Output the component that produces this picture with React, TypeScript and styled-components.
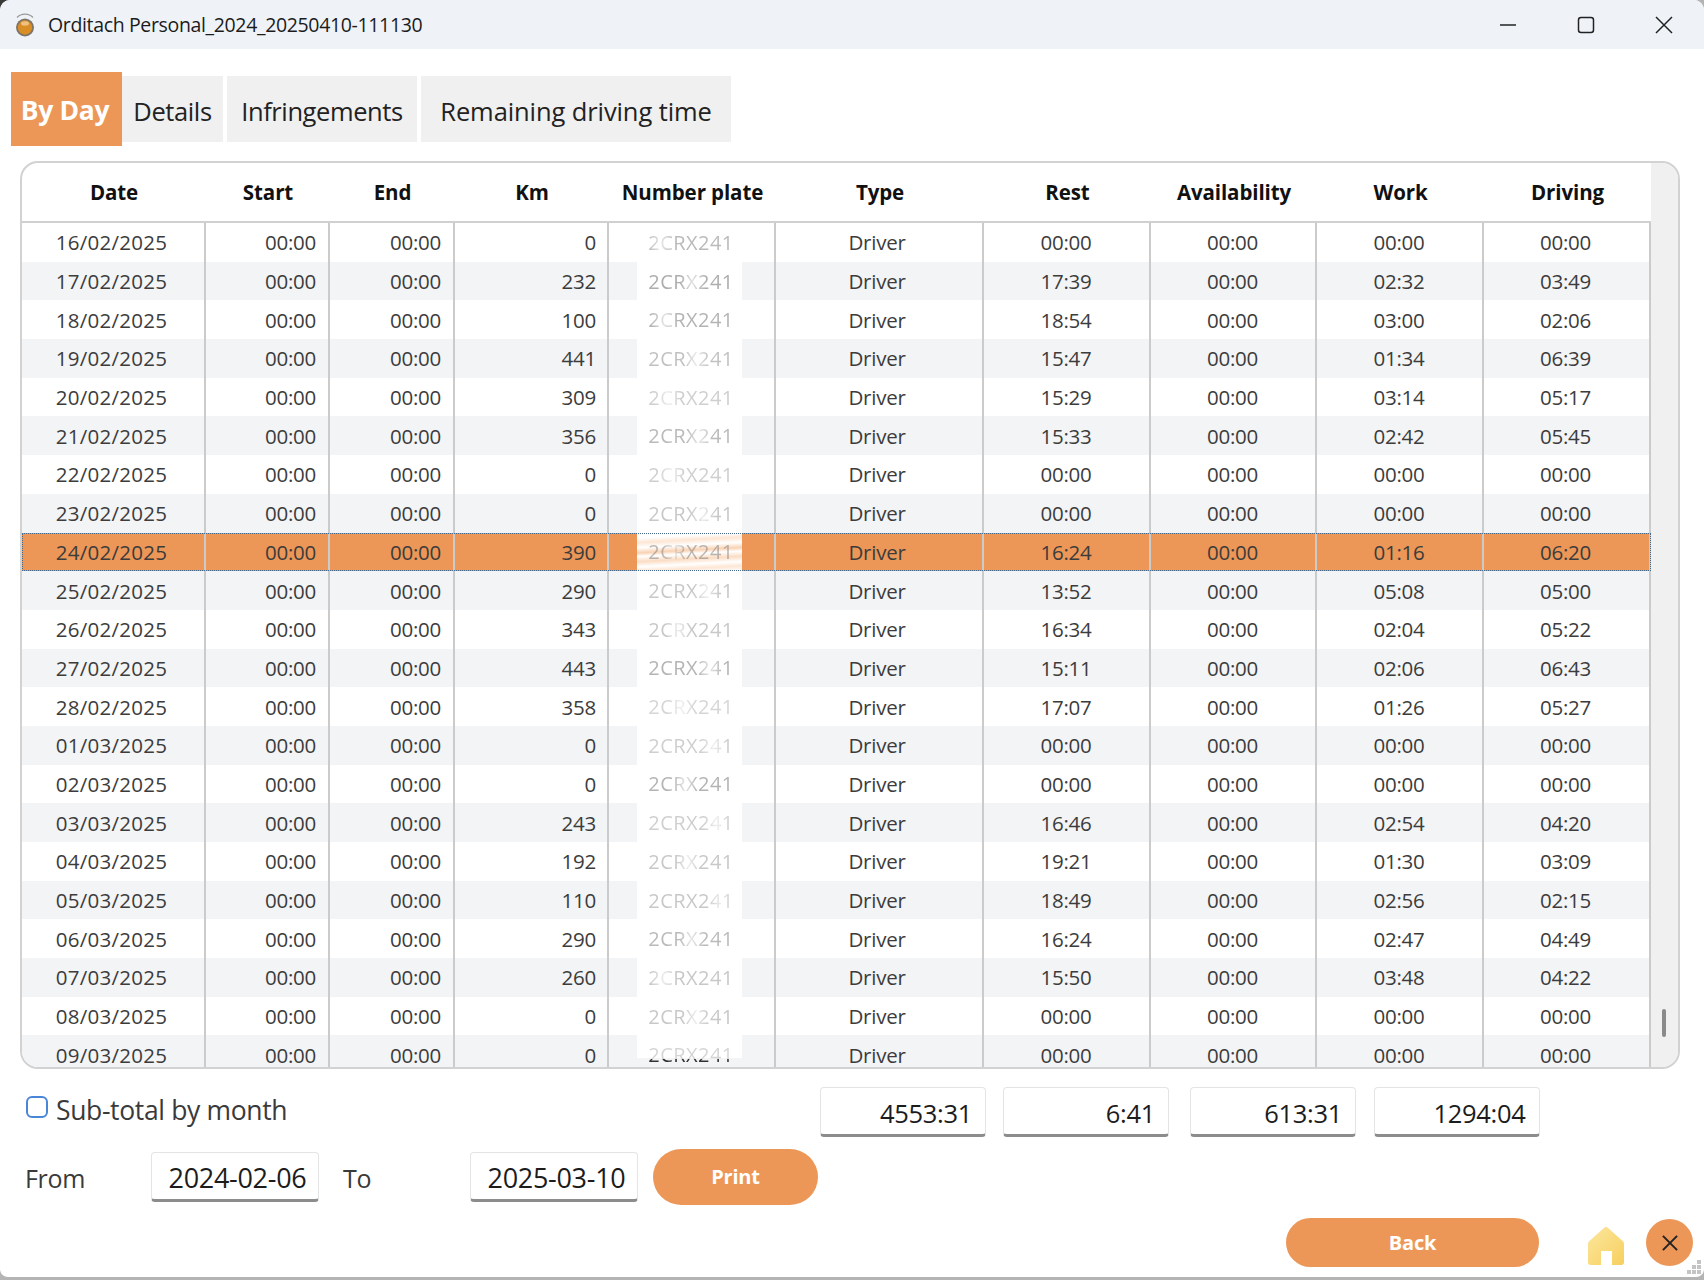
import React from 'react';
import styled, { createGlobalStyle } from 'styled-components';

const ORANGE = '#ec9757';
const FONT = '"Open Sans", "Noto Sans", sans-serif';
const COLUMNS = '184px 124px 125px 154px 167px 208px 167px 166px 167px 167px';

const GlobalStyle = createGlobalStyle`
    html, body {
        margin: 0;
        padding: 0;
        height: 1280px;
        overflow: hidden;
        background: radial-gradient(circle at 0 0, #3a3a3a 9px, #b4b4b4 11px);
    }
    * {
        box-sizing: border-box;
    }
`;

type Row = [string, string, string, string, string, string, number];

// date, km, rest, work, driving, availability, plate opacity
const rows: Row[] = [
    ['16/02/2025', '0', '00:00', '00:00', '00:00', '00:00', 0.5],
    ['17/02/2025', '232', '17:39', '02:32', '03:49', '00:00', 0.6],
    ['18/02/2025', '100', '18:54', '03:00', '02:06', '00:00', 0.55],
    ['19/02/2025', '441', '15:47', '01:34', '06:39', '00:00', 0.45],
    ['20/02/2025', '309', '15:29', '03:14', '05:17', '00:00', 0.35],
    ['21/02/2025', '356', '15:33', '02:42', '05:45', '00:00', 0.5],
    ['22/02/2025', '0', '00:00', '00:00', '00:00', '00:00', 0.35],
    ['23/02/2025', '0', '00:00', '00:00', '00:00', '00:00', 0.4],
    ['24/02/2025', '390', '16:24', '01:16', '06:20', '00:00', 0.5],
    ['25/02/2025', '290', '13:52', '05:08', '05:00', '00:00', 0.4],
    ['26/02/2025', '343', '16:34', '02:04', '05:22', '00:00', 0.4],
    ['27/02/2025', '443', '15:11', '02:06', '06:43', '00:00', 0.55],
    ['28/02/2025', '358', '17:07', '01:26', '05:27', '00:00', 0.3],
    ['01/03/2025', '0', '00:00', '00:00', '00:00', '00:00', 0.35],
    ['02/03/2025', '0', '00:00', '00:00', '00:00', '00:00', 0.55],
    ['03/03/2025', '243', '16:46', '02:54', '04:20', '00:00', 0.35],
    ['04/03/2025', '192', '19:21', '01:30', '03:09', '00:00', 0.4],
    ['05/03/2025', '110', '18:49', '02:56', '02:15', '00:00', 0.4],
    ['06/03/2025', '290', '16:24', '02:47', '04:49', '00:00', 0.5],
    ['07/03/2025', '260', '15:50', '03:48', '04:22', '00:00', 0.4],
    ['08/03/2025', '0', '00:00', '00:00', '00:00', '00:00', 0.4],
    ['09/03/2025', '0', '00:00', '00:00', '00:00', '00:00', 1],
];

const headers = ['Date', 'Start', 'End', 'Km', 'Number plate', 'Type', 'Rest', 'Availability', 'Work', 'Driving'];

// the plate numbers are smudged out in a different place on each row
const smudge = (i: number) => {
    const at = 15 + ((i * 37) % 70);
    return `linear-gradient(90deg, #000 ${at - 15}%, rgba(0,0,0,0.35) ${at}%, #000 ${at + 15}%)`;
};

const AppIcon = () => (
    <svg width="28" height="30" viewBox="0 0 28 30">
        <path d="M6 7.5 C10 3, 18 3, 22 7.5" fill="none" stroke="#9a9a9a" strokeWidth="1.3" />
        <circle cx="14" cy="17.5" r="9" fill="#7b7468" />
        <circle cx="14" cy="17.5" r="7.2" fill="#d98d25" />
        <ellipse cx="14" cy="13.5" rx="4" ry="2.2" fill="#f0c080" />
    </svg>
);

const MinIcon = () => (
    <svg width="18" height="18" viewBox="0 0 18 18">
        <path d="M1 9 H17" stroke="#222" strokeWidth="1.5" />
    </svg>
);

const MaxIcon = () => (
    <svg width="18" height="18" viewBox="0 0 18 18">
        <rect x="1.5" y="1.5" width="15" height="15" rx="2.5" fill="none" stroke="#222" strokeWidth="1.5" />
    </svg>
);

const CrossIcon = ({ size = 18, weight = 1.5 }: { size?: number; weight?: number }) => (
    <svg width={size} height={size} viewBox="0 0 18 18">
        <path d="M1 1 L17 17 M17 1 L1 17" stroke="#222" strokeWidth={weight} />
    </svg>
);

const HomeIcon = () => (
    <svg width="36" height="38" viewBox="0 0 36 38">
        <defs>
            <linearGradient id="home-fill" x1="0" y1="0" x2="1" y2="1">
                <stop offset="0" stopColor="#fce79f" />
                <stop offset="1" stopColor="#f7cf5e" />
            </linearGradient>
        </defs>
        <path
            d="M15.6 1.2 a3.4 3.4 0 0 1 4.8 0 L34.6 14 a3.4 3.4 0 0 1 1.4 2.8 V35 a2.6 2.6 0 0 1 -2.6 3 H24 V24 H13 V38 H2.6 A2.6 2.6 0 0 1 0 35 V16.8 a3.4 3.4 0 0 1 1.4 -2.8 Z"
            fill="url(#home-fill)"
        />
    </svg>
);

const ResizeGrip = () => (
    <svg width="18" height="18" viewBox="0 0 18 18">
        <g fill="#c4c4c4">
            <rect x="12" y="1" width="4" height="4" />
            <rect x="7" y="6" width="4" height="4" />
            <rect x="12" y="6" width="4" height="4" />
            <rect x="2" y="11" width="4" height="4" />
            <rect x="7" y="11" width="4" height="4" />
            <rect x="12" y="11" width="4" height="4" />
        </g>
    </svg>
);

export default function App() {
    return (
        <React.Fragment>
            <GlobalStyle />
            <Window>
                <TitleBar>
                    <AppIcon />
                    <Title>Orditach Personal_2024_20250410-111130</Title>
                    <WindowButtons>
                        <MinIcon />
                        <MaxIcon />
                        <CrossIcon />
                    </WindowButtons>
                </TitleBar>

                <Tabs>
                    <ActiveTab>By Day</ActiveTab>
                    <Tab $width={101} $tracking={-0.4}>Details</Tab>
                    <Tab $width={190} $tracking={-0.4}>Infringements</Tab>
                    <Tab $width={310} $tracking={-0.1}>Remaining driving time</Tab>
                </Tabs>

                <Panel>
                    <TableArea>
                        <HeaderRow>
                            {headers.map(h => (
                                <HeaderCell key={h}>{h}</HeaderCell>
                            ))}
                        </HeaderRow>
                        <TableBody>
                            {rows.map(([date, km, rest, work, driving, avail, ink], i) => {
                                const last = i === rows.length - 1;
                                return (
                                    <DataRow key={date} $shaded={i % 2 === 1} $selected={i === 8}>
                                        <DateCell>{date}</DateCell>
                                        <Cell $align="right" $pad={12}>00:00</Cell>
                                        <Cell $align="right" $pad={12}>00:00</Cell>
                                        <Cell $align="right" $pad={11}>{km}</Cell>
                                        <PlateCell>
                                            <PlatePatch $selected={i === 8} $last={last}>
                                                <PlateText
                                                    $last={last}
                                                    style={last ? undefined : { opacity: ink, WebkitMaskImage: smudge(i) }}
                                                >
                                                    2CRX241
                                                </PlateText>
                                            </PlatePatch>
                                        </PlateCell>
                                        <Cell $pad={4}>Driver</Cell>
                                        <Cell $pad={1}>{rest}</Cell>
                                        <Cell $pad={1}>{avail}</Cell>
                                        <Cell $pad={1}>{work}</Cell>
                                        <Cell $pad={2}>{driving}</Cell>
                                    </DataRow>
                                );
                            })}
                        </TableBody>
                    </TableArea>
                    <ScrollTrack>
                        <ScrollThumb />
                    </ScrollTrack>
                </Panel>

                <TotalsRow>
                    <SubTotal>
                        <CheckBox type="checkbox" />
                        Sub-total by month
                    </SubTotal>
                    <TotalBox readOnly value="4553:31" />
                    <TotalBox readOnly value="6:41" />
                    <TotalBox readOnly value="613:31" />
                    <TotalBox readOnly value="1294:04" />
                </TotalsRow>

                <RangeRow>
                    <RangeLabel $width={126}>From</RangeLabel>
                    <DateBox readOnly value="2024-02-06" />
                    <RangeLabel $width={127} $indent={24}>To</RangeLabel>
                    <DateBox readOnly value="2025-03-10" />
                    <PrintButton>Print</PrintButton>
                </RangeRow>

                <ActionRow>
                    <BackButton>Back</BackButton>
                    <HomeLink><HomeIcon /></HomeLink>
                    <CloseButton><CrossIcon size={16} weight={2.2} /></CloseButton>
                </ActionRow>

                <Grip><ResizeGrip /></Grip>
            </Window>
        </React.Fragment>
    );
}

const Window = styled.div`
    position: relative;
    width: 1704px;
    height: 1277px;
    background: #ffffff;
    border-radius: 10px 10px 8px 8px;
    overflow: hidden;
    font-family: ${FONT};
    color: #222;
`;

const TitleBar = styled.div`
    display: flex;
    align-items: center;
    height: 49px;
    padding: 0 24px 0 11px;
    background: #eff3f8;
`;

const Title = styled.div`
    margin-left: 9px;
    font-size: 19.5px;
    letter-spacing: -0.35px;
    color: #1c1c1c;
`;

const WindowButtons = styled.div`
    display: flex;
    align-items: center;
    gap: 60px;
    margin-left: auto;
    padding-right: 7px;
`;

const Tabs = styled.div`
    display: flex;
    align-items: center;
    height: 74px;
    margin: 23px 0 0 11px;
`;

const ActiveTab = styled.div`
    display: flex;
    align-items: center;
    justify-content: center;
    width: 111px;
    height: 74px;
    padding: 1px 3px 0 0;
    background: ${ORANGE};
    color: #fff;
    font-size: 26.5px;
    font-weight: 700;
    letter-spacing: -0.3px;
`;

const Tab = styled.div<{ $width: number; $tracking: number }>`
    display: flex;
    align-items: center;
    justify-content: center;
    width: ${p => p.$width}px;
    height: 66px;
    margin-right: 4px;
    padding-top: 3px;
    background: #f0f0f0;
    color: #222;
    font-size: 25.5px;
    letter-spacing: ${p => p.$tracking}px;
`;

const Panel = styled.div`
    display: flex;
    width: 1660px;
    height: 908px;
    margin: 15px 0 0 20px;
    border: 2px solid #d2d2d2;
    border-radius: 18px;
    overflow: hidden;
`;

const TableArea = styled.div`
    display: flex;
    flex-direction: column;
    width: 1629px;
`;

const HeaderRow = styled.div`
    display: grid;
    grid-template-columns: ${COLUMNS};
    height: 60px;
    flex: none;
    padding-bottom: 1px;
    border-bottom: 2px solid #d0d0d0;
`;

const HeaderCell = styled.div`
    display: flex;
    align-items: center;
    justify-content: center;
    font-size: 20.5px;
    font-weight: 700;
    letter-spacing: -0.1px;
    color: #111;
`;

const TableBody = styled.div`
    flex: 1;
    overflow: hidden;
`;

const DataRow = styled.div<{ $shaded: boolean; $selected: boolean }>`
    display: grid;
    grid-template-columns: ${COLUMNS};
    height: 38.7px;
    background: ${p => (p.$selected ? ORANGE : p.$shaded ? '#f3f4f6' : '#ffffff')};
    outline: ${p => (p.$selected ? '1px dotted #44688c' : 'none')};
    outline-offset: -1px;
`;

const Cell = styled.div<{ $align?: 'right'; $pad: number }>`
    display: flex;
    align-items: center;
    justify-content: ${p => (p.$align === 'right' ? 'flex-end' : 'center')};
    padding-right: ${p => p.$pad}px;
    border-right: 2px solid #cbcbcb;
    font-size: 20.5px;
    letter-spacing: -0.25px;
    color: #3c3c3c;
`;

const DateCell = styled.div`
    display: flex;
    align-items: center;
    justify-content: center;
    padding-right: 3px;
    border-right: 2px solid #cbcbcb;
    font-size: 20.5px;
    letter-spacing: 0.25px;
    color: #3c3c3c;
`;

const PlateCell = styled.div`
    display: flex;
    padding-left: 28px;
    border-right: 2px solid #cbcbcb;
`;

const PlatePatch = styled.div<{ $selected: boolean; $last: boolean }>`
    display: flex;
    align-items: center;
    justify-content: center;
    width: 105px;
    height: 100%;
    padding-left: 3px;
    background: ${p =>
        p.$selected
            ? 'linear-gradient(177deg, #fff 0 12%, #fde6d4 22%, #fff 34%, #f9d2b3 46%, #fff 54%, #fbdcc3 66%, #fff 78%, #fde6d4 88%, #fff 100%)'
            : p.$last
            ? 'linear-gradient(#fff, #fff) top / 100% 23px no-repeat'
            : '#ffffff'};
`;

const PlateText = styled.span<{ $last: boolean }>`
    font-size: 20px;
    letter-spacing: 0.45px;
    color: ${p => (p.$last ? 'transparent' : '#777')};
    filter: blur(0.7px);
    background: ${p => (p.$last ? 'linear-gradient(#d4d4d4 0 18px, #303030 18px)' : 'none')};
    background-clip: ${p => (p.$last ? 'text' : 'border-box')};
    -webkit-background-clip: ${p => (p.$last ? 'text' : 'border-box')};
`;

const ScrollTrack = styled.div`
    display: flex;
    flex: 1;
    flex-direction: column;
    justify-content: flex-end;
    align-items: center;
    padding: 0 2px 30px 0;
    background: #f0f0f0;
`;

const ScrollThumb = styled.div`
    width: 4px;
    height: 28px;
    border-radius: 2px;
    background: #8a8a8a;
`;

const TotalsRow = styled.div`
    display: grid;
    grid-template-columns: 820px 183px 187px 183.5px 166px;
    align-items: center;
    height: 50px;
    margin-top: 18px;
`;

const SubTotal = styled.label`
    display: flex;
    align-items: center;
    gap: 8px;
    padding: 0 0 4px 26px;
    font-size: 26.5px;
    letter-spacing: -0.35px;
    color: #3a3a3a;
`;

const CheckBox = styled.input`
    appearance: none;
    width: 22px;
    height: 22px;
    margin: -7px 0 0;
    background: #fff;
    border: 2px solid #4a86d8;
    border-radius: 6px;
`;

const FieldBox = styled.input`
    height: 50px;
    border: 1px solid #e4e4e4;
    border-bottom: 3px solid #8c8c8c;
    border-radius: 4px;
    background: #fff;
    font-family: ${FONT};
    color: #1c1c1c;
    outline: none;
`;

const TotalBox = styled(FieldBox)`
    width: 166px;
    padding: 3px 13px 0 0;
    font-size: 25.5px;
    letter-spacing: -0.3px;
    text-align: right;
`;

const DateBox = styled(FieldBox)`
    width: 168px;
    padding: 3px 0 0 5px;
    font-size: 27px;
    letter-spacing: -0.3px;
    text-align: center;
`;

const RangeRow = styled.div`
    display: flex;
    align-items: center;
    height: 57px;
    margin-top: 11px;
    padding-left: 25px;
`;

const RangeLabel = styled.div<{ $width: number; $indent?: number }>`
    width: ${p => p.$width}px;
    margin-left: ${p => p.$indent || 0}px;
    padding-top: 2px;
    font-size: 25px;
    letter-spacing: -0.3px;
    color: #3a3a3a;
`;

const PillButton = styled.button`
    border: none;
    background: ${ORANGE};
    color: #fff;
    font-family: ${FONT};
    font-size: 20px;
    font-weight: 700;
    letter-spacing: -0.2px;
`;

const PrintButton = styled(PillButton)`
    width: 165px;
    height: 56px;
    margin-left: 15px;
    border-radius: 29px;
`;

const ActionRow = styled.div`
    display: flex;
    align-items: center;
    justify-content: flex-end;
    height: 49px;
    margin-top: 13px;
    padding-right: 11px;
`;

const BackButton = styled(PillButton)`
    width: 253px;
    height: 49px;
    border-radius: 25px;
`;

const HomeLink = styled.div`
    display: flex;
    margin: 7px 0 0 49px;
`;

const CloseButton = styled.button`
    display: flex;
    align-items: center;
    justify-content: center;
    width: 47px;
    height: 47px;
    margin-left: 22px;
    padding: 0;
    border: none;
    border-radius: 50%;
    background: ${ORANGE};
`;

const Grip = styled.div`
    position: absolute;
    right: 1px;
    bottom: 0;
    display: flex;
`;
